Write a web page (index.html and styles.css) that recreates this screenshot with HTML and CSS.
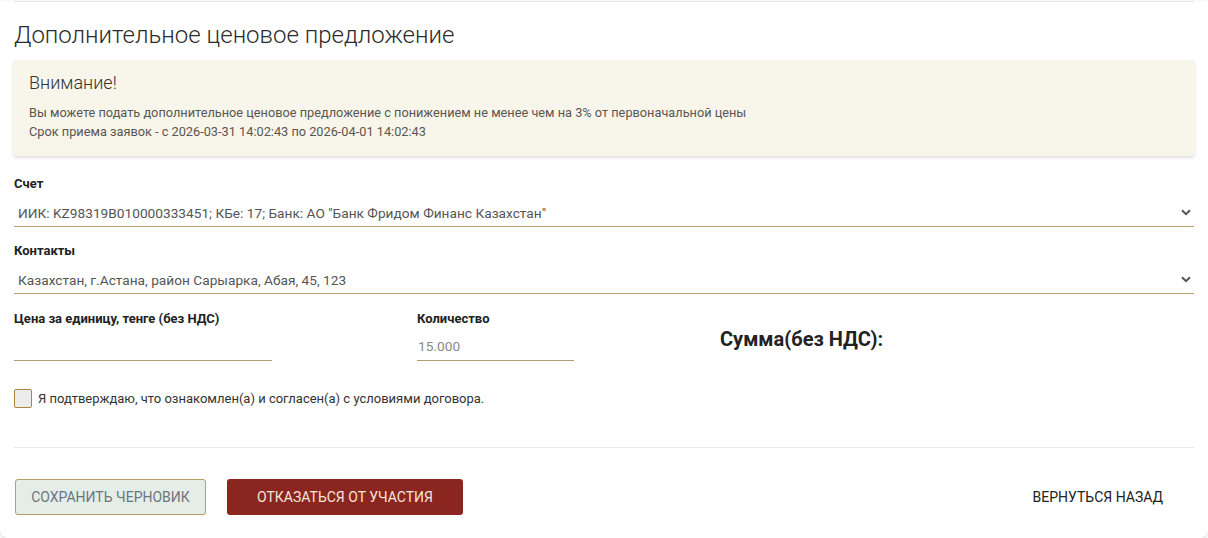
FILE: index.html
```html
<!DOCTYPE html>
<html lang="ru">
<head>
<meta charset="utf-8">
<title>Дополнительное ценовое предложение</title>
<link rel="stylesheet" href="styles.css">
</head>
<body>
<div class="card">
  <div class="topline"></div>
  <h1 class="title">Дополнительное ценовое предложение</h1>
  <div class="alert">
    <div class="alert-title">Внимание!</div>
    <div class="alert-text">Вы можете подать дополнительное ценовое предложение с понижением не менее чем на 3% от первоначальной цены</div>
    <div class="alert-text">Срок приема заявок - с 2026-03-31 14:02:43 по 2026-04-01 14:02:43</div>
  </div>

  <div class="field">
    <div class="label">Счет</div>
    <div class="select">
      <span class="select-value">ИИК: KZ98319B010000333451; КБе: 17; Банк: АО "Банк Фридом Финанс Казахстан"</span>
      <svg class="chev" width="10" height="7" viewBox="0 0 10 7"><path d="M1 1.2 L5 5.2 L9 1.2" fill="none" stroke="#555" stroke-width="2"/></svg>
    </div>
  </div>

  <div class="field field2">
    <div class="label">Контакты</div>
    <div class="select">
      <span class="select-value">Казахстан, г.Астана, район Сарыарка, Абая, 45, 123</span>
      <svg class="chev" width="10" height="7" viewBox="0 0 10 7"><path d="M1 1.2 L5 5.2 L9 1.2" fill="none" stroke="#555" stroke-width="2"/></svg>
    </div>
  </div>

  <div class="row">
    <div class="col">
      <div class="label">Цена за единицу, тенге (без НДС)</div>
      <div class="input input-price"></div>
    </div>
    <div class="col">
      <div class="label">Количество</div>
      <div class="input input-qty">15.000</div>
    </div>
    <div class="col col-sum">
      <div class="sum">Сумма(без НДС):</div>
    </div>
  </div>

  <label class="check">
    <span class="box"></span>
    <span class="check-text">Я подтверждаю, что ознакомлен(а) и согласен(а) с условиями договора.</span>
  </label>

  <div class="divider"></div>

  <div class="actions">
    <button class="btn btn-draft">СОХРАНИТЬ ЧЕРНОВИК</button>
    <button class="btn btn-decline">ОТКАЗАТЬСЯ ОТ УЧАСТИЯ</button>
    <button class="btn btn-back">ВЕРНУТЬСЯ НАЗАД</button>
  </div>
</div>
</body>
</html>
```

FILE: styles.css
```css
* { box-sizing: border-box; }
html, body { margin: 0; padding: 0; background: #fff; }
body {
  font-family: Roboto, "Noto Sans", "Liberation Sans", sans-serif;
  color: #333;
  height: 538px;
  overflow: hidden;
}
.card {
  background: #fff;
  padding: 0 14px 23px;
  border-radius: 0 0 8px 8px;
  box-shadow: 0 1px 3px rgba(0,0,0,0.18);
}
.topline {
  height: 1px;
  margin-top: 1px;
  background: #e9e9e9;
}
.title {
  margin: 19px 0 0;
  font-size: 24px;
  font-weight: 300;
  line-height: 29px;
  color: #2b2b2b;
}
.alert {
  margin-top: 10px;
  margin-left: -1px;
  margin-right: -1px;
  background: #f8f6eb;
  border-radius: 4px;
  box-shadow: 0 2px 3px rgba(0,0,0,0.12);
  padding: 11px 16px 16px;
  height: 96px;
}
.alert-title {
  font-size: 18px;
  font-weight: 300;
  line-height: 24px;
  color: #333;
  margin-bottom: 8px;
}
.alert-text {
  font-size: 12.75px;
  line-height: 19px;
  color: #5a5550;
}
.field { margin-top: 20px; }
.field2 { margin-top: 16px; }
.label {
  font-size: 13px;
  font-weight: 700;
  line-height: 16px;
  color: #222;
}
.select {
  display: flex;
  align-items: center;
  justify-content: space-between;
  height: 35px;
  padding: 7px 3px 0 4px;
  border-bottom: 1px solid #b8a466;
}
.select-value {
  font-size: 13.7px;
  color: #555;
}
.row {
  display: grid;
  grid-template-columns: 403px 303px 1fr;
  margin-top: 17px;
}
.input {
  height: 34px;
  padding: 11px 1px 0;
  border-bottom: 1px solid #b0a070;
  font-size: 13.7px;
  color: #888;
  line-height: 16px;
}
.input-price { width: 258px; }
.input-qty { width: 157px; }
.col-sum { display: flex; align-items: center; }
.sum {
  font-size: 20px;
  font-weight: 700;
  color: #222;
  margin-top: 5px;
}
.check {
  display: flex;
  align-items: center;
  margin-top: 28px;
  gap: 6px;
}
.box {
  width: 18px;
  height: 19px;
  border: 1px solid #a8893a;
  border-radius: 2px;
  background: #ececec;
}
.check-text {
  font-size: 13px;
  color: #333;
}
.divider {
  height: 1px;
  background: #e9e9e9;
  margin-top: 39px;
}
.actions {
  display: flex;
  align-items: center;
  margin-top: 31px;
  padding-left: 1px;
}
.btn {
  font-family: Roboto, "Noto Sans", "Liberation Sans", sans-serif;
  font-size: 14px;
  border-radius: 3px;
  height: 36px;
  cursor: pointer;
}
.btn-draft {
  width: 191px;
  background: #e5ede9;
  border: 1px solid #b5a060;
  color: #6c757d;
}
.btn-decline {
  margin-left: 21px;
  width: 236px;
  background: #8b2520;
  border: none;
  color: #f5e6dc;
}
.btn-back {
  margin-left: auto;
  margin-right: 17px;
  background: none;
  border: none;
  color: #222;
  padding: 0 14px;
}
```
